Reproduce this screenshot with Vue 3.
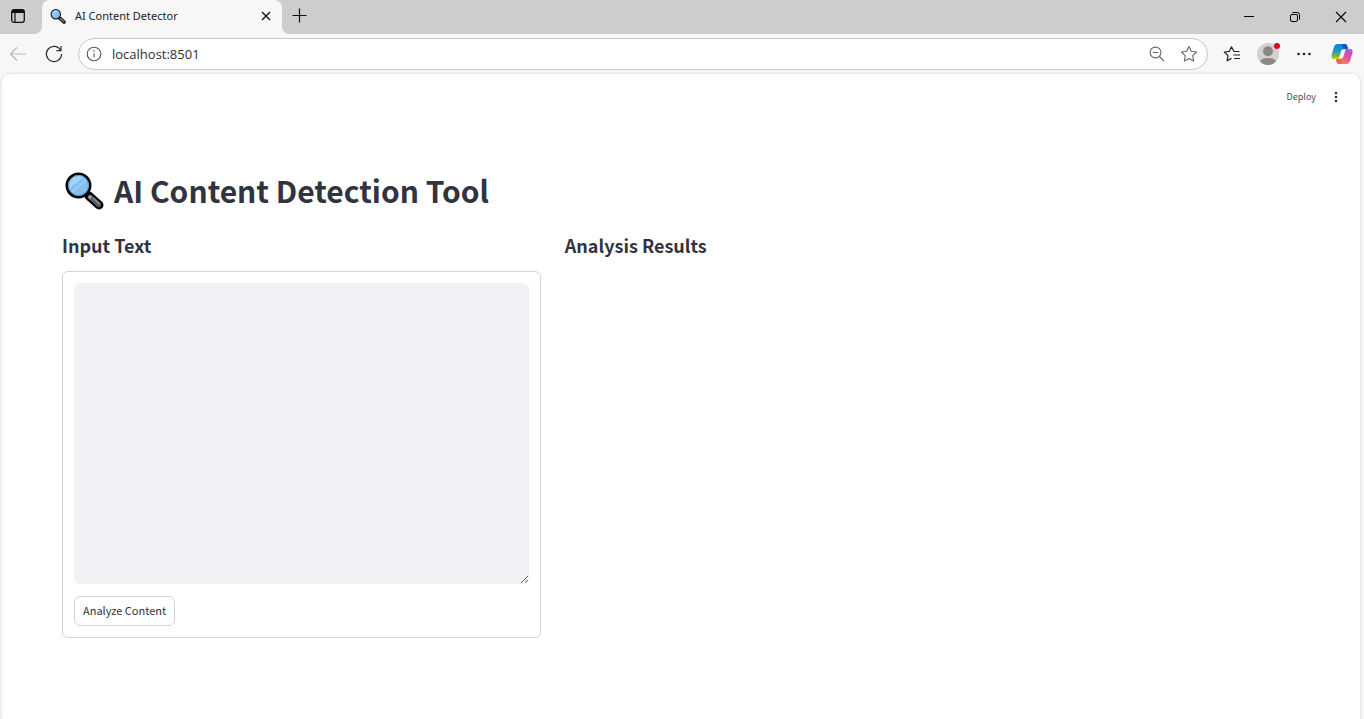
<script setup>
import { ref } from 'vue'

const address = ref('localhost:8501')
const text = ref('')
</script>

<template>
  <div class="browser">
    <svg class="defs" width="0" height="0" aria-hidden="true">
      <defs>
        <symbol id="lens" viewBox="0 -1 40 40">
          <path d="M25 25 35 34" stroke="#050505" stroke-width="9" stroke-linecap="round" />
          <path d="M26 26 29 28.600" stroke="#9aa0a3" stroke-width="4" stroke-linecap="round" />
          <path d="M29 28.500 34.700 33.700" stroke="#565b5e" stroke-width="5" stroke-linecap="round" />
          <path d="M29.500 27.500 35 32.500" stroke="#899094" stroke-width="1.500" stroke-linecap="round" />
          <circle cx="14.500" cy="14.500" r="11.700" fill="#83bff0" stroke="#050505" stroke-width="2.600" />
          <path d="M5.500 17A10 10 0 0 1 20 6Z" fill="#a9d3f6" />
          <path d="M8 21 22.500 8.500" stroke="#a0cdf4" stroke-width="2" />
          <circle cx="14.500" cy="14.500" r="10" fill="none" stroke="#5d9bc8" stroke-width="1" />
        </symbol>
      </defs>
    </svg>

    <header class="tabs">
      <button class="tab-actions" aria-label="Tab actions">
        <svg width="16" height="16" viewBox="0 0 16 16" fill="none" stroke="#111">
          <rect x="1.700" y="1.700" width="12.600" height="12.600" rx="2.200" stroke-width="1.300" />
          <path d="M2 3.500H14" stroke-width="3" />
          <path d="M5 5V14" stroke-width="1.200" />
        </svg>
      </button>
      <div class="tab">
        <svg class="favicon" width="16" height="16"><use href="#lens" /></svg>
        <span class="tab-title">AI Content Detector</span>
        <button class="tab-close" aria-label="Close tab">
          <svg width="10" height="10" viewBox="0 0 10 10"><path d="M1 1 9 9M9 1 1 9" stroke="#111" stroke-width="1.400" /></svg>
        </button>
      </div>
      <button class="new-tab" aria-label="New tab">
        <svg width="15" height="15" viewBox="0 0 15 15"><path d="M7.500 .5V14.500M.5 7.500H14.500" stroke="#111" stroke-width="1.200" /></svg>
      </button>
      <div class="window-buttons">
        <button aria-label="Minimize"><svg width="12" height="12" viewBox="0 0 12 12"><path d="M1 5.500H11" stroke="#000" /></svg></button>
        <button aria-label="Restore">
          <svg width="12" height="12" viewBox="0 0 12 12" fill="none" stroke="#000">
            <rect x="1.500" y="3.500" width="7" height="7" rx="1.500" />
            <path d="M3.500 1.500H8A2.500 2.500 0 0 1 10.500 4V8.500" />
          </svg>
        </button>
        <button aria-label="Close"><svg width="12" height="12" viewBox="0 0 12 12"><path d="M1 1 11 11M11 1 1 11" stroke="#000" stroke-width="1.100" /></svg></button>
      </div>
    </header>

    <nav class="toolbar">
      <button class="icon back" aria-label="Back" disabled>
        <svg width="18" height="18" viewBox="0 0 18 18" fill="none" stroke="#b9b9b9" stroke-width="1.200"><path d="M17 9H1.500M8 2.500 1.500 9 8 15.500" /></svg>
      </button>
      <button class="icon" aria-label="Refresh">
        <svg width="18" height="18" viewBox="0 0 18 18" fill="none" stroke="#2b2b2b" stroke-width="1.200"><path d="M15.800 5.500A7.600 7.600 0 1 0 16.600 9M16 1V5.600H11.400" /></svg>
      </button>
      <div class="address">
        <svg width="16" height="16" viewBox="0 0 16 16" fill="none" stroke="#555"><circle cx="8" cy="8" r="6.800" stroke-width="1.100" /><path d="M8 7.200V11.300" stroke-width="1.100" /><circle cx="8" cy="5" r=".8" fill="#555" stroke="none" /></svg>
        <input v-model="address" aria-label="Address" spellcheck="false" />
        <button aria-label="Zoom out">
          <svg width="16" height="16" viewBox="0 0 16 16" fill="none" stroke="#666" stroke-width="1.100"><circle cx="6.500" cy="6.500" r="5.400" /><path d="M3.800 6.500H9.200M10.500 10.500 15 15" /></svg>
        </button>
        <button aria-label="Add to favorites">
          <svg width="18" height="18" viewBox="0 0 18 18" fill="none" stroke="#666" stroke-width="1.100" stroke-linejoin="round"><path d="M9 1.500 11.300 6.300 16.600 7 12.700 10.700 13.700 16 9 13.400 4.300 16 5.300 10.700 1.400 7 6.700 6.300Z" /></svg>
        </button>
      </div>
      <div class="tools">
        <button class="icon" aria-label="Favorites">
          <svg width="18" height="18" viewBox="0 0 18 18" fill="none" stroke="#222" stroke-width="1.200" stroke-linejoin="round"><path d="M16.500 6.500H11L8.500 1.800 6.300 6.300 1.300 7 5 10.600 4.100 15.800 8.500 13.400M10.500 10H17M11 13.500H17" /></svg>
        </button>
        <button class="icon" aria-label="Profile">
          <svg width="24" height="24" viewBox="0 0 24 24">
            <circle cx="12" cy="12" r="11" fill="#d2d0ce" />
            <circle cx="12" cy="9.200" r="5" fill="#8a8886" />
            <path d="M4 19.500C5.500 16.800 8 16 12 16S18.500 16.800 20 19.500A11 11 0 0 1 4 19.500Z" fill="#8a8886" />
            <circle cx="21" cy="4" r="3" fill="#d20f19" />
          </svg>
        </button>
        <button class="icon" aria-label="Settings and more">
          <svg width="16" height="16" viewBox="0 0 16 16" fill="#222"><circle cx="2.500" cy="8" r="1.300" /><circle cx="8" cy="8" r="1.300" /><circle cx="13.500" cy="8" r="1.300" /></svg>
        </button>
        <button class="icon copilot" aria-label="Copilot">
          <svg width="22" height="22" viewBox="0 0 22 22">
            <defs>
              <linearGradient id="cool" x1="0" y1="0" x2="0" y2="1"><stop offset="0" stop-color="#147bdc" /><stop offset=".45" stop-color="#159ac5" /><stop offset=".75" stop-color="#67b54a" /><stop offset="1" stop-color="#efc315" /></linearGradient>
              <linearGradient id="warm" x1=".8" y1="0" x2=".2" y2="1"><stop offset="0" stop-color="#ac55e6" /><stop offset=".5" stop-color="#e35593" /><stop offset="1" stop-color="#fb8a50" /></linearGradient>
            </defs>
            <path d="M6.500 1H14Q15.800 1 16.300 3L17 6H14Q12 6 11.200 8.500L9.500 14Q8.800 16 7 16H3Q-.3 16 .5 12L3 4Q4 1 6.500 1Z" fill="url(#cool)" />
            <path d="M11 1H14Q15.800 1 16.300 3L17 6H14Q12.500 6 12 5Z" fill="#174fc2" />
            <path d="M15.500 21H8Q6.200 21 5.700 19L5 16H8Q10 16 10.800 13.500L12.500 8Q13.200 6 15 6H19Q22.300 6 21.500 10L19 18Q18 21 15.500 21Z" fill="url(#warm)" />
            <path d="M5 16H8Q9.500 16 10 17L11 21H8Q6.200 21 5.700 19Z" fill="#f3604c" />
            <path d="M10.300 7.500Q10.800 6.500 12 6.500H14.500L12.500 13.500Q12 15.500 10.500 15.500H8Z" fill="#f7f7f7" />
          </svg>
        </button>
      </div>
    </nav>

    <main class="page">
      <div class="app-bar">
        <button class="deploy">Deploy</button>
        <button class="menu" aria-label="Main menu">
          <svg width="12" height="12" viewBox="0 0 12 12" fill="#31333f"><circle cx="6" cy="2" r="1.300" /><circle cx="6" cy="6" r="1.300" /><circle cx="6" cy="10" r="1.300" /></svg>
        </button>
      </div>
      <div class="content">
        <h1><svg width="40" height="40" aria-hidden="true"><use href="#lens" /></svg>AI Content Detection Tool</h1>
        <div class="columns">
          <section>
            <h2 id="input-title">Input Text</h2>
            <form @submit.prevent>
              <textarea v-model="text" aria-labelledby="input-title"></textarea>
              <button type="submit">Analyze Content</button>
            </form>
          </section>
          <section>
            <h2>Analysis Results</h2>
          </section>
        </div>
      </div>
    </main>
  </div>
</template>

<style>
body {
  margin: 0;
  background: #f7f7f7;
}
</style>

<style scoped>
* {
  box-sizing: border-box;
}
.browser {
  display: flex;
  flex-direction: column;
  min-height: 100vh;
  background: #f7f7f7;
  font-family: "Noto Sans", "Open Sans", sans-serif;
}
.defs {
  position: absolute;
}
button {
  display: inline-flex;
  align-items: center;
  justify-content: center;
  padding: 0;
  border: 0;
  background: none;
  font-family: inherit;
}
svg {
  flex: none;
}
.tabs {
  display: flex;
  height: 34px;
  background: #cdcdcd;
}
.tab-actions {
  width: 42px;
  padding: 0 6px 2px 0;
}
.tab {
  position: relative;
  display: flex;
  align-items: center;
  gap: 9px;
  width: 240px;
  padding: 0 11px 2px 8px;
  border-radius: 8px 8px 0 0;
  background: #f7f7f7;
}
.tab::before,
.tab::after {
  content: "";
  position: absolute;
  bottom: 0;
  width: 8px;
  height: 8px;
}
.tab::before {
  right: 100%;
  background: radial-gradient(circle at 0 0, transparent 8px, #f7f7f7 8px);
}
.tab::after {
  left: 100%;
  background: radial-gradient(circle at 100% 0, transparent 8px, #f7f7f7 8px);
}
.tab-title {
  flex: 1;
  font-size: 11px;
  line-height: 16px;
  color: #1b1b1b;
  white-space: nowrap;
}
.new-tab {
  width: 35px;
  padding-bottom: 3px;
}
.window-buttons {
  display: flex;
  margin-left: auto;
}
.window-buttons button {
  width: 46px;
}
.toolbar {
  display: flex;
  align-items: center;
  height: 40px;
}
.icon {
  width: 36px;
  height: 32px;
}
.copilot {
  width: 40px;
}
.address {
  display: flex;
  flex: 1;
  align-items: center;
  height: 32px;
  margin-left: 6px;
  padding: 0 2px 0 7px;
  border: 1px solid #c8c8c8;
  border-radius: 16px;
  background: #fff;
}
.address input {
  flex: 1;
  min-width: 0;
  padding: 0 10px;
  border: 0;
  outline: 0;
  background: none;
  font-family: "Open Sans", "Noto Sans", sans-serif;
  font-size: 13px;
  line-height: 20px;
  color: #303030;
}
.address button {
  width: 32px;
  height: 28px;
}
.tools {
  display: flex;
  margin: 0 2px 0 6px;
}
.page {
  flex: 1;
  margin: 0 4px 0 2px;
  border-radius: 8px 8px 0 0;
  background: #fff;
  box-shadow: 0 0 3px #d0d0d0;
  font-family: "Noto Sans CJK JP", "Noto Sans", sans-serif;
  color: #31333f;
}
.app-bar {
  display: flex;
  align-items: center;
  justify-content: flex-end;
  gap: 12px;
  height: 45px;
  padding-right: 16px;
}
.deploy {
  font-size: 9px;
  line-height: 16px;
  color: #4b4d57;
}
.menu {
  width: 16px;
  height: 24px;
}
.content {
  padding: 47px 77px 40px 60px;
}
h1,
h2 {
  margin: 0;
  font-weight: 700;
}
h1 {
  display: flex;
  align-items: center;
  gap: 10px;
  padding-left: 2px;
  font-size: 30px;
  line-height: 48px;
}
.columns {
  display: grid;
  grid-template-columns: 2fr 3fr;
  gap: 24px;
  margin-top: 17px;
}
h2 {
  font-size: 18px;
  line-height: 28px;
}
form {
  display: flex;
  flex-direction: column;
  align-items: flex-start;
  gap: 12px;
  margin-top: 12px;
  padding: 11px;
  border: 1px solid #d3d4d7;
  border-radius: 6px;
}
textarea {
  display: block;
  width: 100%;
  height: 301px;
  padding: 12px;
  border: 0;
  border-radius: 6px;
  outline: 0;
  background: #f0f2f6;
  font-family: inherit;
  font-size: 11px;
  color: #31333f;
  resize: vertical;
}
form button {
  height: 30px;
  padding: 0 8px 2px;
  border: 1px solid #d3d4d7;
  border-radius: 6px;
  background: #fff;
  font-size: 11px;
  line-height: 18px;
  color: #31333f;
}
</style>
